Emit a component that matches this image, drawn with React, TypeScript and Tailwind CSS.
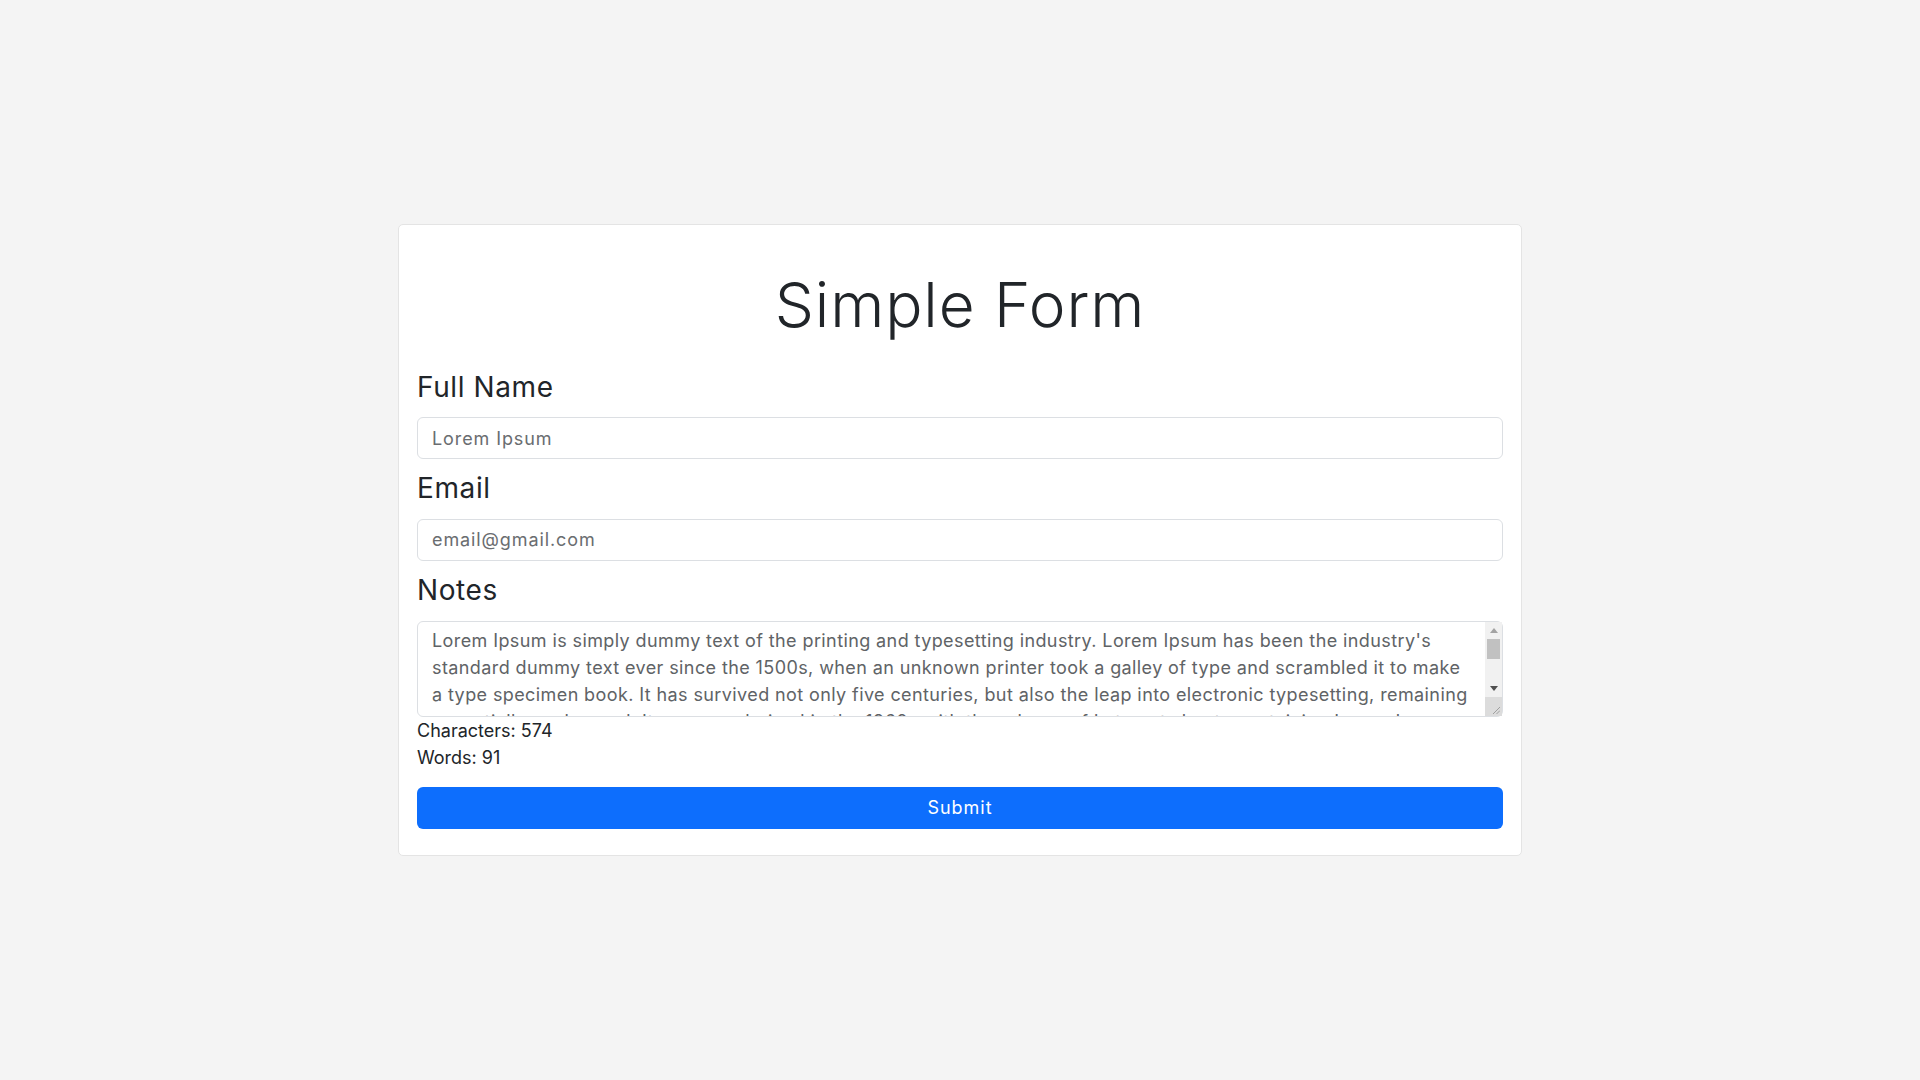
import { useState } from 'react';

const NOTES =
  "Lorem Ipsum is simply dummy text of the printing and typesetting industry. Lorem Ipsum has been the industry's\nstandard dummy text ever since the 1500s, when an unknown printer took a galley of type and scrambled it to make\na type specimen book. It has survived not only five centuries, but also the leap into electronic typesetting, remaining\nessentially unchanged. It was popularised in the 1960s with the release of Letraset sheets containing Lorem Ipsum passages, and more recently with desktop publishing software like Aldus PageMaker including versions of Lorem Ipsum.";

const Field = ({ label, placeholder }: { label: string; placeholder: string }) => (
  <div className="flex flex-col">
    <label className="text-[28px] leading-[1.2] tracking-[0.6px] text-[#212529] mb-[13px] mt-[13px]">{label}</label>
    <input
      type="text"
      placeholder={placeholder}
      className="h-[42px] w-full rounded-[6px] border border-[#dcdfe3] bg-white px-[14px] text-[18px] tracking-[0.9px] text-[#212529] placeholder:text-[#6a6d70] outline-none"
    />
  </div>
);

// fake classic scrollbar drawn over the textarea's right edge
const ScrollBar = () => (
  <div className="pointer-events-none absolute right-px top-px bottom-px w-[17px] flex flex-col bg-[#f1f1f1]">
    <div className="h-[17px] flex items-center justify-center">
      <svg width="8" height="5" viewBox="0 0 8 5">
        <path d="M0 5 L4 0 L8 5 Z" fill="#a3a3a3" />
      </svg>
    </div>
    <div className="mx-[2px] h-[20px] bg-[#c1c1c1]" />
    <div className="flex-1" />
    <div className="h-[17px] flex items-center justify-center">
      <svg width="8" height="5" viewBox="0 0 8 5">
        <path d="M0 0 L4 5 L8 0 Z" fill="#505050" />
      </svg>
    </div>
    <div className="h-[19px] bg-[#dcdcdc] flex items-end justify-end p-[2px]">
      <svg width="8" height="8" viewBox="0 0 8 8">
        <path d="M1 8 L8 1 M4.5 8 L8 4.5" stroke="#8f8f8f" strokeWidth="0.8" />
      </svg>
    </div>
  </div>
);

export default function App() {
  const [notes, setNotes] = useState(NOTES);

  return (
    <div className="min-h-screen bg-[#f4f4f4] flex items-center justify-center font-['Inter','Liberation_Sans',sans-serif]">
      <div className="w-[1124px] bg-white border border-[#e4e4e4] rounded-[5px] px-[18px] pt-[43px] pb-[26px]">
        <h1 className="text-center text-[62px] leading-[1.2] font-light tracking-[0.9px] text-[#212529] mb-[15px]">Simple Form</h1>

        <Field label="Full Name" placeholder="Lorem Ipsum" />
        <Field label="Email" placeholder="email@gmail.com" />

        <div className="flex flex-col">
          <label className="text-[28px] leading-[1.2] tracking-[0.6px] text-[#212529] mb-[13px] mt-[13px]">Notes</label>
          <div className="relative">
            <textarea
              value={notes}
              onChange={(e) => setNotes(e.target.value)}
              className="block h-[96px] w-full overflow-hidden rounded-[6px] border border-[#dcdfe3] bg-white pl-[14px] pr-[20px] pt-[5px] text-[18px] leading-[27px] tracking-[0.4px] text-[#606366] outline-none resize-none"
            />
            <ScrollBar />
          </div>
        </div>

        <div className="text-[18px] leading-[27px] text-[#212529]">
          <p>Characters: 574</p>
          <p>Words: 91</p>
        </div>

        <button className="mt-[16px] h-[42px] w-full rounded-[6px] bg-[#0d6efd] text-[18px] tracking-[1px] text-white">
          Submit
        </button>
      </div>
    </div>
  );
}
